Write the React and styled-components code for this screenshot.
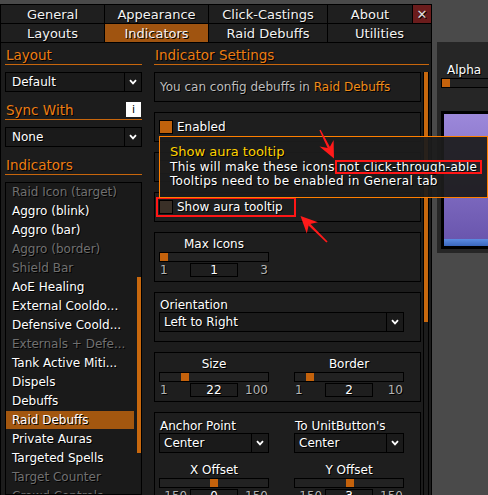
import styled, { createGlobalStyle } from "styled-components";

const GlobalStyle = createGlobalStyle`
  * { box-sizing: border-box; }
  html, body { margin: 0; padding: 0; background: #4a4a4a; }
  body { font-family: "DejaVu Sans", "Liberation Sans", sans-serif; }
`;

const Screen = styled.div`
  position: relative;
  width: 488px;
  height: 495px;
  overflow: hidden;
  display: flex;
  align-items: flex-start;
  padding-top: 4px;
  background: #4a4a4a;
  color: #fff;
  font-size: 12px;
  text-shadow: 1px 1px 0 #000;
`;

const Window = styled.div`
  width: 432px;
  height: 491px;
  flex-shrink: 0;
  display: flex;
  flex-direction: column;
`;

const TabGrid = styled.div`
  display: grid;
  grid-template-columns: 103px 103px 118px 84px 18px;
  grid-auto-rows: 18px;
  gap: 1px;
  padding: 1px;
  background: #000;
`;

const Tab = styled.div`
  grid-column: span ${(p) => p.$span || 1};
  display: flex;
  align-items: center;
  justify-content: center;
  background: ${(p) => (p.$active ? "#a05410" : "#1f1f1f")};
  color: #f2f2f2;
  font-size: 13px;
  white-space: nowrap;
`;

const CloseTab = styled(Tab)`
  background: #6b1c1c;
  color: #dcdcdc;
  font-size: 13px;
`;

const Body = styled.div`
  flex: 1;
  min-height: 0;
  display: flex;
  gap: 12px;
  padding-left: 4px;
  background: #1c1c1c;
  border-left: 1px solid #000;
  border-right: 1px solid #000;
`;

const LeftCol = styled.div`
  width: 137px;
  display: flex;
  flex-direction: column;
`;

const RightCol = styled.div`
  width: 275px;
  display: flex;
  flex-direction: column;
`;

const Header = styled.div`
  flex-shrink: 0;
  height: 22px;
  margin-top: ${(p) => p.$top || 0}px;
  padding: 0 0 1px 1px;
  display: flex;
  align-items: flex-end;
  justify-content: space-between;
  border-bottom: 1px solid #c8660c;
  color: #ec7d14;
  font-size: 13.5px;
  line-height: 16px;
`;

const InfoIcon = styled.span`
  width: 15px;
  height: 15px;
  margin: 0 1px 1px 0;
  display: flex;
  align-items: center;
  justify-content: center;
  background: #fff;
  color: #000;
  font-size: 11px;
  text-shadow: none;
`;

const Select = styled.div`
  flex-shrink: 0;
  width: ${(p) => (p.$w ? `${p.$w}px` : "100%")};
  height: 20px;
  margin-top: ${(p) => p.$top || 0}px;
  display: flex;
  border: 1px solid #000;
  background: #1a1a1a;
`;

const SelectText = styled.div`
  flex: 1;
  padding-left: ${(p) => p.$inset}px;
  line-height: 18px;
  color: #fff;
  white-space: nowrap;
`;

const Chevron = styled.div`
  width: 17px;
  display: flex;
  align-items: center;
  justify-content: center;
  border-left: 1px solid #000;
`;

const ListBox = styled.div`
  flex: 1;
  min-height: 0;
  margin-top: 7px;
  display: flex;
  overflow: hidden;
  border: 1px solid #000;
  background: #1a1a1a;
`;

const ListItems = styled.div`
  width: 128px;
  display: flex;
  flex-direction: column;
  gap: 1px;
`;

const ListItem = styled.div`
  flex-shrink: 0;
  height: 18px;
  padding-left: 6px;
  line-height: 18px;
  white-space: nowrap;
  color: ${(p) => (p.$off ? "#707070" : "#fff")};
  background: ${(p) => (p.$sel ? "#a3570f" : "transparent")};
`;

const ListTrack = styled.div`
  flex: 1;
  padding-left: 3px;
`;

const ListThumb = styled.div`
  width: 4px;
  height: 176px;
  margin-top: 94px;
  background: #c8680e;
`;

const ScrollArea = styled.div`
  flex: 1;
  min-height: 0;
  margin-top: 7px;
  display: flex;
  gap: 2px;
`;

const Boxes = styled.div`
  position: relative;
  width: 267px;
  flex-shrink: 0;
  display: flex;
  flex-direction: column;
  gap: 10px;
`;

const ScrollTrack = styled.div`
  width: 6px;
  border-left: 1px solid #000;
  border-right: 1px solid #000;
  background: #1c1c1c;
`;

const ScrollThumb = styled.div`
  height: 250px;
  background: #c8680e;
`;

const Box = styled.div`
  flex-shrink: 0;
  height: ${(p) => p.$h}px;
  padding: ${(p) => p.$pad || "0 4px"};
  display: flex;
  flex-direction: column;
  justify-content: ${(p) => (p.$center ? "center" : "flex-start")};
  border: 1px solid #000;
  background: #1e1e1e;
`;

const Note = styled.div`
  padding-left: 1px;
  color: #bdbdbd;
  white-space: nowrap;
`;

const Accent = styled.span`
  color: #f08c1a;
`;

const CheckRow = styled.div`
  width: fit-content;
  display: flex;
  align-items: center;
  gap: 4px;
  padding-right: ${(p) => (p.$marked ? "10px" : "0")};
  outline: ${(p) => (p.$marked ? "2px solid #ff1616" : "none")};
  outline-offset: 1px;
  color: #fff;
  white-space: nowrap;
`;

const Check = styled.span`
  width: 14px;
  height: 14px;
  flex-shrink: 0;
  border: 1px solid #000;
  background: ${(p) => (p.$on ? "#c0620c" : "#3a3027")};
`;

const FieldLabel = styled.div`
  height: 14px;
  padding-left: 1px;
  line-height: 14px;
  white-space: nowrap;
`;

const Pair = styled.div`
  display: grid;
  grid-template-columns: 110px 110px;
  column-gap: 25px;
  row-gap: ${(p) => p.$rowGap || 0}px;
`;

const SliderWrap = styled.div`
  width: ${(p) => p.$w || 110}px;
  display: flex;
  flex-direction: column;
`;

const SliderLabel = styled.div`
  height: 15px;
  line-height: 15px;
  text-align: center;
  white-space: nowrap;
`;

const Track = styled.div`
  position: relative;
  height: 10px;
  border: 1px solid #000;
  background: #222;
`;

const Thumb = styled.div`
  position: absolute;
  top: 0;
  width: 8px;
  height: 8px;
  background: #c4620c;
`;

const ValueRow = styled.div`
  height: 14px;
  margin-top: 1px;
  display: grid;
  grid-template-columns: 1fr 48px 1fr;
  line-height: 14px;
`;

const Bound = styled.span`
  padding: 0 1px;
  color: #b4b4b4;
  text-align: ${(p) => (p.$end ? "right" : "left")};
  white-space: nowrap;
`;

const ValueBox = styled.div`
  border: 1px solid #000;
  line-height: 12px;
  text-align: center;
`;

const Tooltip = styled.div`
  position: absolute;
  left: 5px;
  top: 64px;
  z-index: 2;
  width: 329px;
  height: 62px;
  padding: 7px 0 0 10px;
  border: 1px solid #ff7f00;
  background: rgba(28, 28, 28, 0.93);
  white-space: nowrap;
`;

const TipTitle = styled.div`
  color: #ffd100;
  font-size: 13px;
  line-height: 16px;
`;

const TipLine = styled.div`
  line-height: 14px;
  letter-spacing: 0.3px;
`;

const Marked = styled.span`
  padding-right: 5px;
  outline: 2px solid #ff1616;
  outline-offset: -2px;
`;

const SidePanel = styled.div`
  width: 60px;
  height: 211px;
  flex-shrink: 0;
  margin: 38px 0 0 5px;
  padding-left: 4px;
  display: flex;
  flex-direction: column;
  background: #262626;
`;

const AlphaLabel = styled.div`
  height: 15px;
  margin-top: 21px;
  padding-left: 6px;
  line-height: 15px;
`;

const Preview = styled.div`
  height: 138px;
  margin-top: 23px;
  padding: 3px;
  display: flex;
  flex-direction: column;
  background: #000;
`;

const PreviewFill = styled.div`
  flex: 1;
  background: linear-gradient(#9c88da, #6a56ae);
`;

const PreviewBar = styled.div`
  height: 7px;
  background: linear-gradient(#5c8ce2, #3a66bc);
`;

const Overlay = styled.svg`
  position: absolute;
  left: 0;
  top: 0;
  z-index: 5;
  pointer-events: none;
`;

const indicators = [
  ["Raid Icon (target)", true],
  ["Aggro (blink)"],
  ["Aggro (bar)"],
  ["Aggro (border)", true],
  ["Shield Bar", true],
  ["AoE Healing"],
  ["External Cooldo..."],
  ["Defensive Coold..."],
  ["Externals + Defe...", true],
  ["Tank Active Miti..."],
  ["Dispels"],
  ["Debuffs"],
  ["Raid Debuffs", false, true],
  ["Private Auras"],
  ["Targeted Spells"],
  ["Target Counter", true],
  ["Crowd Controls", true],
];

const ChevronIcon = () => (
  <svg width="8" height="6" viewBox="0 0 8 6">
    <polyline points="1,1.2 4,4.4 7,1.2" fill="none" stroke="#fff" strokeWidth="1.8" />
  </svg>
);

const Dropdown = ({ value, width, inset = 4, top }) => (
  <Select $w={width} $top={top}>
    <SelectText $inset={inset}>{value}</SelectText>
    <Chevron>
      <ChevronIcon />
    </Chevron>
  </Select>
);

const Slider = ({ label, min, max, value, width = 110 }) => {
  const left = ((value - min) / (max - min)) * (width - 10);
  return (
    <SliderWrap $w={width}>
      <SliderLabel>{label}</SliderLabel>
      <Track>
        <Thumb style={{ left }} />
      </Track>
      <ValueRow>
        <Bound>{min}</Bound>
        <ValueBox>{value}</ValueBox>
        <Bound $end>{max}</Bound>
      </ValueRow>
    </SliderWrap>
  );
};

const Arrows = () => (
  <Overlay width="488" height="495" viewBox="0 0 488 495">
    <g fill="#ff1a1a">
      <polygon points="319.4,130.3 320.6,129.7 330.2,147.6 328,148.8" />
      <polygon points="334,158.5 333.6,140 329.1,148.2 319.5,146.5" />
      <polygon points="309.8,223.3 308,225.1 326.4,242.6 327.6,241.4" />
      <polygon points="300.5,216 318,222.2 308.9,224.2 306.8,233.5" />
    </g>
  </Overlay>
);

export default function App() {
  return (
    <>
      <GlobalStyle />
      <Screen>
        <Window>
          <TabGrid>
            <Tab>General</Tab>
            <Tab>Appearance</Tab>
            <Tab>Click-Castings</Tab>
            <Tab>About</Tab>
            <CloseTab>✕</CloseTab>
            <Tab>Layouts</Tab>
            <Tab $active>Indicators</Tab>
            <Tab>Raid Debuffs</Tab>
            <Tab $span={2}>Utilities</Tab>
          </TabGrid>

          <Body>
            <LeftCol>
              <Header>Layout</Header>
              <Dropdown value="Default" inset={6} top={7} />
              <Header $top={6}>
                Sync With
                <InfoIcon>i</InfoIcon>
              </Header>
              <Dropdown value="None" inset={6} top={7} />
              <Header $top={6}>Indicators</Header>
              <ListBox>
                <ListItems>
                  {indicators.map(([name, off, sel]) => (
                    <ListItem key={name} $off={off} $sel={sel}>
                      {name}
                    </ListItem>
                  ))}
                </ListItems>
                <ListTrack>
                  <ListThumb />
                </ListTrack>
              </ListBox>
            </LeftCol>

            <RightCol>
              <Header>Indicator Settings</Header>
              <ScrollArea>
                <Boxes>
                  <Box $h={30} $center>
                    <Note>
                      You can config debuffs in <Accent>Raid Debuffs</Accent>
                    </Note>
                  </Box>
                  <Box $h={30} $center>
                    <CheckRow>
                      <Check $on />
                      Enabled
                    </CheckRow>
                  </Box>
                  <Box $h={30} $center>
                    <CheckRow>
                      <Check />
                    </CheckRow>
                  </Box>
                  <Box $h={30} $center>
                    <CheckRow $marked>
                      <Check />
                      Show aura tooltip
                    </CheckRow>
                  </Box>
                  <Box $h={50} $pad="4px 4px 0">
                    <Slider label="Max Icons" min={1} max={3} value={1} />
                  </Box>
                  <Box $h={50} $pad="5px 4px 0">
                    <FieldLabel>Orientation</FieldLabel>
                    <Dropdown value="Left to Right" width={245} />
                  </Box>
                  <Box $h={50} $pad="4px 4px 0">
                    <Pair>
                      <Slider label="Size" min={1} max={100} value={22} />
                      <Slider label="Border" min={1} max={10} value={2} />
                    </Pair>
                  </Box>
                  <Box $h={110} $pad="6px 4px 0">
                    <Pair $rowGap={10}>
                      <div>
                        <FieldLabel>Anchor Point</FieldLabel>
                        <Dropdown value="Center" width={110} />
                      </div>
                      <div>
                        <FieldLabel>To UnitButton's</FieldLabel>
                        <Dropdown value="Center" width={110} />
                      </div>
                      <Slider label="X Offset" min={-150} max={150} value={0} />
                      <Slider label="Y Offset" min={-150} max={150} value={3} />
                    </Pair>
                  </Box>

                  <Tooltip>
                    <TipTitle>Show aura tooltip</TipTitle>
                    <TipLine>
                      This will make these icons
                      <Marked> not click-through-able</Marked>
                    </TipLine>
                    <TipLine>Tooltips need to be enabled in General tab</TipLine>
                  </Tooltip>
                </Boxes>
                <ScrollTrack>
                  <ScrollThumb />
                </ScrollTrack>
              </ScrollArea>
            </RightCol>
          </Body>
        </Window>

        <SidePanel>
          <AlphaLabel>Alpha</AlphaLabel>
          <Track>
            <Thumb style={{ left: 0 }} />
          </Track>
          <Preview>
            <PreviewFill />
            <PreviewBar />
          </Preview>
        </SidePanel>

        <Arrows />
      </Screen>
    </>
  );
}
